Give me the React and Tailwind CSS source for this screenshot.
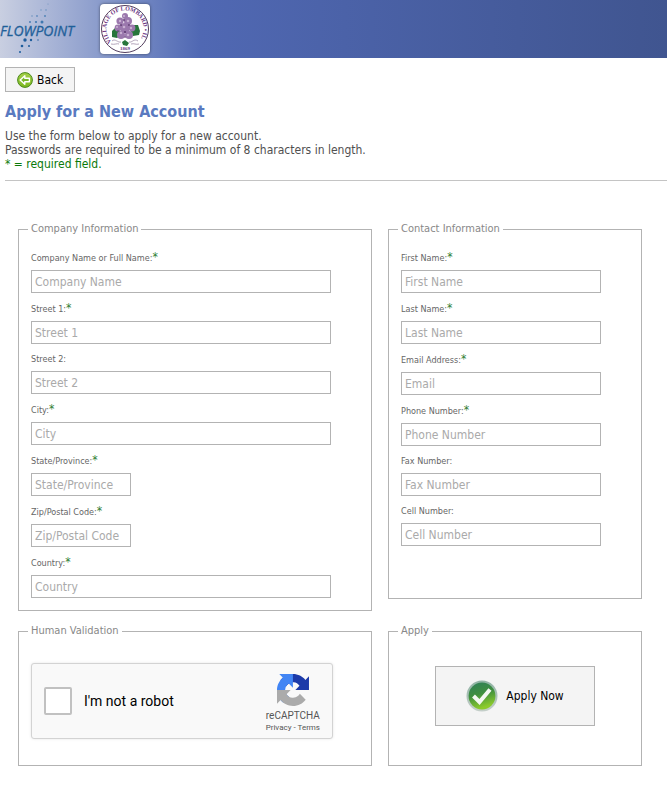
const companyFields = [
  { id: 'company', label: 'Company Name or Full Name:', placeholder: 'Company Name', required: true },
  { id: 'street1', label: 'Street 1:', placeholder: 'Street 1', required: true },
  { id: 'street2', label: 'Street 2:', placeholder: 'Street 2' },
  { id: 'city', label: 'City:', placeholder: 'City', required: true },
  { id: 'state', label: 'State/Province:', placeholder: 'State/Province', required: true, short: true },
  { id: 'zip', label: 'Zip/Postal Code:', placeholder: 'Zip/Postal Code', required: true, short: true },
  { id: 'country', label: 'Country:', placeholder: 'Country', required: true },
]

const contactFields = [
  { id: 'firstName', label: 'First Name:', placeholder: 'First Name', required: true },
  { id: 'lastName', label: 'Last Name:', placeholder: 'Last Name', required: true },
  { id: 'email', label: 'Email Address:', placeholder: 'Email', required: true },
  { id: 'phone', label: 'Phone Number:', placeholder: 'Phone Number', required: true },
  { id: 'fax', label: 'Fax Number:', placeholder: 'Fax Number' },
  { id: 'cell', label: 'Cell Number:', placeholder: 'Cell Number' },
]

const FlowpointLogo = () => (
  <svg viewBox="0 0 80 58" className="w-20 h-[58px] shrink-0" role="img" aria-label="Flowpoint">
    <g fill="#3f78b0">
      <circle cx="48" cy="4" r="0.6" opacity="0.5" />
      <circle cx="41" cy="10" r="0.7" opacity="0.6" />
      <circle cx="46" cy="10" r="0.8" opacity="0.6" />
      <circle cx="32" cy="16" r="0.8" opacity="0.6" />
      <circle cx="37" cy="16" r="0.9" opacity="0.7" />
      <circle cx="45" cy="16" r="1" opacity="0.8" />
      <circle cx="30" cy="22" r="0.9" />
      <circle cx="36" cy="22" r="1.1" />
      <circle cx="42" cy="22" r="1.5" />
    </g>
    <g fill="#1d5c9c">
      <circle cx="25" cy="40" r="1.7" />
      <circle cx="31" cy="40" r="1.2" />
      <circle cx="38" cy="40" r="0.7" />
      <circle cx="22" cy="46" r="1.3" />
      <circle cx="29" cy="46" r="1" />
      <circle cx="20" cy="52" r="1" />
    </g>
    <text x="0" y="36" fontSize="14" fontStyle="italic" fill="#1f5f99" stroke="#1f5f99" strokeWidth="0.3" fontFamily="'Open Sans', sans-serif">FLOWPOINT</text>
  </svg>
)

const VillageSeal = () => (
  <svg viewBox="0 0 50 50" className="w-[50px] h-[50px]" role="img" aria-label="Village of Lombard, IL">
    <defs>
      <path id="sealTop" d="M11.5 37.8 A18.6 18.6 0 1 1 38.5 37.8" />
    </defs>
    <circle cx="25" cy="25" r="23.5" fill="#fff" stroke="#54405f" strokeWidth="1" />
    <text fontSize="6" fontWeight="bold" fill="#6b3583" fontFamily="'Liberation Serif', serif">
      <textPath href="#sealTop">VILLAGE OF LOMBARD • IL</textPath>
    </text>
    <path d="M12 27l4-4 4 3 1 5-4 3-5-1zM38 21l-5 0-3 5 3 6 6-1 1-4zM22 38l3-2 4 3-2 3-4-1z" fill="#28753b" />
    <path d="M12 37c3-3 6 2 9 1M29 38c3 1 5-4 9-1M11 40c4 1 6-1 8 0M31 40c3-1 5 1 8 0" fill="none" stroke="#b3a5bb" strokeWidth="1" />
    <g fill="#9b78ad">
      <circle cx="25" cy="12" r="3" />
      <circle cx="20" cy="17" r="3.6" />
      <circle cx="28" cy="17" r="4" />
      <circle cx="18" cy="24" r="3.4" />
      <circle cx="25" cy="24" r="5" />
      <circle cx="32" cy="24" r="3.4" />
      <circle cx="21" cy="31" r="4" />
      <circle cx="29" cy="31" r="4" />
    </g>
    <g fill="#c9b0d3">
      <circle cx="24" cy="12" r="1.1" />
      <circle cx="20" cy="17" r="1.2" />
      <circle cx="28" cy="17" r="1.3" />
      <circle cx="17" cy="23" r="1" />
      <circle cx="24" cy="23" r="1.3" />
      <circle cx="31" cy="24" r="1.2" />
      <circle cx="21" cy="29" r="1.2" />
      <circle cx="28" cy="31" r="1.3" />
    </g>
    <g fill="#5f3b73">
      <circle cx="24" cy="16" r="0.9" />
      <circle cx="21" cy="21" r="1" />
      <circle cx="29" cy="21" r="0.9" />
      <circle cx="25" cy="28" r="1.1" />
      <circle cx="18" cy="27" r="0.8" />
      <circle cx="25" cy="33" r="0.8" />
    </g>
    <text x="25" y="46" textAnchor="middle" fontSize="5" fontWeight="bold" fill="#6b3583" fontFamily="'Liberation Serif', serif">1869</text>
  </svg>
)

const BackIcon = () => (
  <svg viewBox="0 0 16 16" className="w-4 h-4" aria-hidden="true">
    <defs>
      <linearGradient id="backFill" x1="0" y1="0" x2="0" y2="1">
        <stop offset="0" stopColor="#a5d04a" />
        <stop offset="1" stopColor="#7cb820" />
      </linearGradient>
    </defs>
    <circle cx="8" cy="8" r="7.4" fill="url(#backFill)" stroke="#4c8a1c" strokeWidth="1" />
    <path d="M3.2 8l4.6-4.2v2.4h4.6v3.6H7.8v2.4z" fill="#7ab82a" stroke="#fff" strokeWidth="1.4" strokeLinejoin="round" />
  </svg>
)

const CheckIcon = () => (
  <svg viewBox="0 0 32 32" className="w-8 h-8" aria-hidden="true">
    <defs>
      <linearGradient id="checkFill" x1="0" y1="0" x2="0.3" y2="1">
        <stop offset="0" stopColor="#2f7f5a" />
        <stop offset="0.5" stopColor="#3f8f3f" />
        <stop offset="1" stopColor="#8ccb2c" />
      </linearGradient>
      <linearGradient id="checkRing" x1="0" y1="0" x2="0" y2="1">
        <stop offset="0" stopColor="#8fb3a3" />
        <stop offset="1" stopColor="#c5cfca" />
      </linearGradient>
    </defs>
    <circle cx="16" cy="16" r="15.5" fill="url(#checkRing)" />
    <circle cx="16" cy="16" r="13.4" fill="url(#checkFill)" />
    <path d="M7.5 16l6 6L24 9.5" fill="none" stroke="#f4f8f2" strokeWidth="4" />
  </svg>
)

const RecaptchaIcon = () => (
  <svg viewBox="0 0 64 64" className="w-8 h-8" aria-hidden="true">
    <path fill="#1c3aa9" d="M64 31.955l-.033-1.37V4.687l-7.16 7.16C50.948 4.674 42.033.093 32.05.093c-10.4 0-19.622 4.96-25.458 12.64l11.736 11.86a15.55 15.55 0 0 1 4.754-5.334c2.05-1.6 4.952-2.906 8.968-2.906.485 0 .86.057 1.135.163 4.976.393 9.288 3.14 11.828 7.124l-8.307 8.307L64 31.953" />
    <path fill="#4285f4" d="M31.862.094l-1.37.033H4.594l7.16 7.16C4.58 13.147 0 22.06 0 32.046c0 10.4 4.96 19.622 12.64 25.458L24.5 45.768a15.55 15.55 0 0 1-5.334-4.754c-1.6-2.05-2.906-4.952-2.906-8.968 0-.485.057-.86.163-1.135.393-4.976 3.14-9.288 7.124-11.828l8.307 8.307L31.86.095" />
    <path fill="#ababab" d="M.001 32.045l.033 1.37v25.898l7.16-7.16c5.86 7.173 14.774 11.754 24.76 11.754 10.4 0 19.622-4.96 25.458-12.64l-11.736-11.86a15.55 15.55 0 0 1-4.754 5.334c-2.05 1.6-4.952 2.906-8.968 2.906-.485 0-.86-.057-1.135-.163-4.976-.393-9.288-3.14-11.828-7.124l8.307-8.307c-10.522.04-22.4.066-27.295-.005" />
  </svg>
)

const Field = ({ id, label, placeholder, required, size }) => (
  <div>
    <label htmlFor={id} className={`flex items-center pt-[5px] text-[9px] text-[#666] ${required ? 'h-7' : 'h-[27px]'}`}>
      {label}
      {required && <span className="pb-1 text-[12px] leading-3 text-[#2e7d32]">*</span>}
    </label>
    <input
      id={id}
      type="text"
      placeholder={placeholder}
      className={`block h-[23px] max-w-full border border-[#b3b3b3] bg-white px-[3px] text-[12px] text-[#333] placeholder:text-[#aaa] ${size}`}
    />
  </div>
)

const Group = ({ title, className, children }) => (
  <fieldset className={`min-w-0 border border-[#b3b3b3] px-3 ${className}`}>
    <legend className="-ml-[3px] px-[3px] text-[11px] leading-[14px] text-[#888]">{title}</legend>
    {children}
  </fieldset>
)

const App = () => {
  return (
    <div className="min-h-screen bg-white font-['DejaVu_Sans_Condensed','DejaVu_Sans',sans-serif] text-[12px] text-[#505050]">
      <header className="flex h-[58px] items-center gap-5 bg-linear-to-r from-[#c9cfe1] via-[#5068b3] via-30% to-[#405590]">
        <FlowpointLogo />
        <div className="rounded-sm bg-white shadow-[0_0_3px_rgba(0,0,0,0.5)]">
          <VillageSeal />
        </div>
      </header>

      <main>
        <div className="ml-[5px] border-b border-[#c4c4c4] pt-[9px] pb-[9px]">
          <button type="button" className="flex h-[25px] items-center gap-1 border border-[#b3b3b3] bg-[#f4f4f4] px-[11px] text-[12px] text-black">
            <BackIcon />
            Back
          </button>
          <h1 className="mt-2 text-[16px] leading-6 font-bold text-[#5a7ac0]">Apply for a New Account</h1>
          <p className="mt-[5px] leading-[14px]">Use the form below to apply for a new account.</p>
          <p className="leading-[14px]">Passwords are required to be a minimum of 8 characters in length.</p>
          <p className="leading-[14px] text-[#0a7a0a]">* = required field.</p>
        </div>

        <form className="grid grid-cols-[354fr_254fr] items-start gap-x-4 gap-y-[13px] pt-[41px] pr-[25px] pb-[18px] pl-[18px]" onSubmit={(e) => e.preventDefault()}>
          <Group title="Company Information" className="pt-[6px] pb-3">
            {companyFields.map(({ short, ...f }) => (
              <Field key={f.id} {...f} size={short ? 'w-[100px]' : 'w-[300px]'} />
            ))}
          </Group>

          <Group title="Contact Information" className="pt-[6px] pb-[52px]">
            {contactFields.map((f) => (
              <Field key={f.id} {...f} size="w-[200px]" />
            ))}
          </Group>

          <Group title="Human Validation" className="pt-[25px] pb-[26px]">
            <div className="flex h-[76px] w-[302px] max-w-full items-center justify-between rounded-[3px] border border-[#d3d3d3] bg-[#f9f9f9] pr-3 pl-3 font-[Roboto,sans-serif] shadow-[0_0_3px_rgba(0,0,0,0.1)]">
              <label className="flex items-center gap-3 text-[14px] text-black">
                <input type="checkbox" className="h-7 w-7 appearance-none rounded-xs border-2 border-[#c1c1c1] bg-white" />
                I'm not a robot
              </label>
              <div className="flex flex-col items-center pt-[6px] text-[#555]">
                <RecaptchaIcon />
                <span className="mt-1 text-[10px] leading-3">reCAPTCHA</span>
                <span className="text-[8px] leading-3">
                  <a href="#privacy">Privacy</a> - <a href="#terms">Terms</a>
                </span>
              </div>
            </div>
          </Group>

          <Group title="Apply" className="pt-7 pb-[39px]">
            <button type="submit" className="mx-auto flex h-[60px] w-40 max-w-full items-center justify-center gap-2 border border-[#b3b3b3] bg-[#f4f4f4] text-[12px] text-black">
              <CheckIcon />
              Apply Now
            </button>
          </Group>
        </form>
      </main>
    </div>
  )
}

export default App
